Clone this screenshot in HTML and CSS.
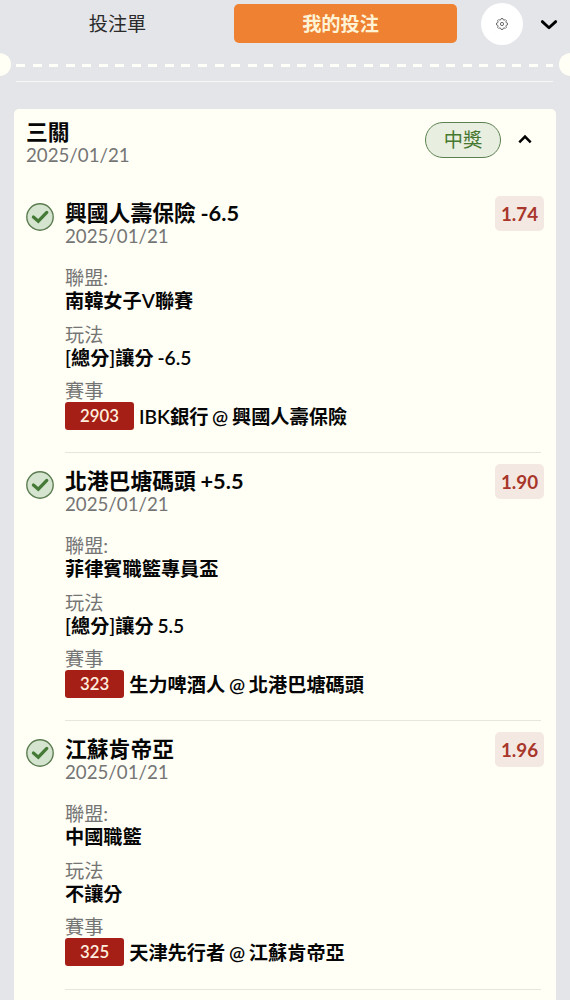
FILE: index.html
```html
<!DOCTYPE html>
<html lang="zh-Hant">
<head>
    <meta charset="UTF-8">
    <meta name="viewport" content="width=device-width, initial-scale=1.0">
    <title>我的投注</title>
    <link rel="stylesheet" href="styles.css">
</head>
<body>

    <!-- Tabs -->
    <header class="tabs">
        <button class="tab">投注單</button>
        <button class="tab active">我的投注</button>
        <button class="settings" aria-label="設定">
            <svg width="12" height="12" viewBox="0 0 12 12" fill="none" stroke="#444" stroke-width=".8" stroke-linejoin="round">
                <path d="M4.8 1.7 5.2.5h1.6l.4 1.2 1 .4 1.1-.5 1.1 1.1-.5 1.1.4 1 1.2.4v1.6l-1.2.4-.4 1 .5 1.1-1.1 1.1-1.1-.5-1 .4-.4 1.2H5.2l-.4-1.2-1-.4-1.1.5-1.1-1.1.5-1.1-.4-1L.5 6.8V5.200l1.2-.4.4-1-.5-1.1 1.1-1.1 1.1.5z"/>
                <circle cx="6" cy="6" r="1.6"/>
            </svg>
        </button>
        <button class="collapse" aria-label="收合">
            <svg width="18" height="12" viewBox="0 0 18 12" fill="none" stroke="#000" stroke-width="2.8" stroke-linecap="round" stroke-linejoin="round">
                <path d="M2.3 2.6 9 8.8l6.7-6.2"/>
            </svg>
        </button>
    </header>

    <!-- Ticket tear line -->
    <div class="tear"></div>

    <main class="ticket">
        <div class="ticket-head">
            <div>
                <h2 class="title">三關</h2>
                <div class="date">2025/01/21</div>
            </div>
            <span class="status">中獎</span>
            <svg class="arrow" width="14" height="10" viewBox="0 0 14 10" fill="none" stroke="#000" stroke-width="2.5">
                <path d="M1.3 8.3 7 2.5l5.7 5.8"/>
            </svg>
        </div>

        <section class="bet">
            <svg class="check" width="28" height="28" viewBox="0 0 28 28" fill="none">
                <circle cx="14" cy="14" r="13.2" fill="#d5e4cf" stroke="#5c7d51" stroke-width="1.4"/>
                <path d="M7.4 14 12.3 18.2 20.8 9.4" stroke="#447a35" stroke-width="3.2" stroke-linecap="round"/>
            </svg>
            <div class="bet-body">
                <div class="bet-head">
                    <h3 class="title">興國人壽保險 -6.5</h3>
                    <span class="odds">1.74</span>
                </div>
                <div class="date">2025/01/21</div>
                <dl>
                    <dt>聯盟:</dt>
                    <dd>南韓女子V聯賽</dd>
                    <dt>玩法</dt>
                    <dd>[總分]讓分 -6.5</dd>
                    <dt>賽事</dt>
                    <dd class="match"><span class="code">2903</span>IBK銀行 @ 興國人壽保險</dd>
                </dl>
            </div>
        </section>

        <section class="bet">
            <svg class="check" width="28" height="28" viewBox="0 0 28 28" fill="none">
                <circle cx="14" cy="14" r="13.2" fill="#d5e4cf" stroke="#5c7d51" stroke-width="1.4"/>
                <path d="M7.4 14 12.3 18.2 20.8 9.4" stroke="#447a35" stroke-width="3.2" stroke-linecap="round"/>
            </svg>
            <div class="bet-body">
                <div class="bet-head">
                    <h3 class="title">北港巴塘碼頭 +5.5</h3>
                    <span class="odds">1.90</span>
                </div>
                <div class="date">2025/01/21</div>
                <dl>
                    <dt>聯盟:</dt>
                    <dd>菲律賓職籃專員盃</dd>
                    <dt>玩法</dt>
                    <dd>[總分]讓分 5.5</dd>
                    <dt>賽事</dt>
                    <dd class="match"><span class="code">323</span>生力啤酒人 @ 北港巴塘碼頭</dd>
                </dl>
            </div>
        </section>

        <section class="bet">
            <svg class="check" width="28" height="28" viewBox="0 0 28 28" fill="none">
                <circle cx="14" cy="14" r="13.2" fill="#d5e4cf" stroke="#5c7d51" stroke-width="1.4"/>
                <path d="M7.4 14 12.3 18.2 20.8 9.4" stroke="#447a35" stroke-width="3.2" stroke-linecap="round"/>
            </svg>
            <div class="bet-body">
                <div class="bet-head">
                    <h3 class="title">江蘇肯帝亞</h3>
                    <span class="odds">1.96</span>
                </div>
                <div class="date">2025/01/21</div>
                <dl>
                    <dt>聯盟:</dt>
                    <dd>中國職籃</dd>
                    <dt>玩法</dt>
                    <dd>不讓分</dd>
                    <dt>賽事</dt>
                    <dd class="match"><span class="code">325</span>天津先行者 @ 江蘇肯帝亞</dd>
                </dl>
            </div>
        </section>
    </main>

</body>
</html>
```
FILE: styles.css
```css
* {
    box-sizing: border-box;
}

body {
    margin: 0;
    height: 1000px;
    overflow: hidden;
    background: #e4e5e8;
    color: #060606;
    font-family: Lato, "Noto Sans CJK TC", sans-serif;
    font-size: 19.2px;
}

button {
    border: none;
    padding: 0;
    background: none;
    font: inherit;
    color: inherit;
    cursor: pointer;
}

h2, h3, dl, dd {
    margin: 0;
}

svg {
    display: block;
}

/* Tabs */
.tabs {
    display: flex;
    align-items: center;
    height: 47px;
    padding-right: 12px;
}

.tab {
    width: 234px;
    height: 39px;
    padding-left: 1px;
    line-height: 39px;
    color: #2b2b2b;
}

.tab.active {
    width: 223px;
    padding: 0 10px 0 0;
    border-radius: 5px;
    background: #ee8132;
    color: #fff3d6;
    font-weight: 600;
}

.settings {
    display: flex;
    align-items: center;
    justify-content: center;
    width: 42px;
    height: 42px;
    margin-left: 24px;
    border-radius: 50%;
    background: #fff;
}

.collapse {
    margin-left: auto;
    padding-top: 2px;
}

/* Dashed line with a notch at each end */
.tear {
    position: relative;
    height: 35px;
    margin: 0 17px 0 16px;
    border-bottom: 1px solid #f7f7f5;
    background: repeating-linear-gradient(to right, #fffffa 0 9px, transparent 9px 16.55px) 0 17px / 100% 3px no-repeat;
}

.tear::before,
.tear::after {
    content: "";
    position: absolute;
    top: 6px;
    width: 23px;
    height: 23px;
    border-radius: 50%;
    background: #fffff6;
}

.tear::before {
    left: -28px;
}

.tear::after {
    right: -29px;
}

/* Ticket */
.ticket {
    min-height: 900px;
    margin: 27px 14px 0;
    padding: 0 12px;
    border-radius: 5px;
    background: #fffff6;
}

.title {
    font-size: 21.8px;
    line-height: 26px;
    font-weight: 700;
    word-spacing: -.6px;
    white-space: nowrap;
}

.date {
    font-size: 18.7px;
    line-height: 20px;
    color: #757575;
}

.ticket-head {
    display: flex;
    align-items: flex-start;
    height: 76px;
    padding-top: 10px;
}

.status {
    width: 76px;
    height: 36px;
    margin: 3px 17px 0 auto;
    border: 1.5px solid #5c8150;
    border-radius: 18px;
    background: #e8eee0;
    color: #47782f;
    line-height: 33px;
    text-align: center;
}

.arrow {
    margin: 15px 12px 0 0;
}

/* Bet */
.bet {
    display: flex;
    height: 268.2px;
}

.check {
    flex: none;
    margin: 18px 11px 0 0;
}

.bet-body {
    flex: 1;
    margin-right: 3px;
    padding-top: 15px;
    border-bottom: 1px solid #e6e6df;
}

.bet-head {
    display: flex;
    justify-content: space-between;
    height: 26px;
}

.odds {
    width: 49px;
    height: 35px;
    margin: -4px -3px 0 0;
    border-radius: 5px;
    background: #f4e8e2;
    color: #a8362a;
    font-size: 18.8px;
    font-weight: 700;
    line-height: 35px;
    text-align: center;
}

dl {
    margin-top: 20px;
}

dt {
    line-height: 23px;
    color: #757575;
}

dd {
    height: 24px;
    margin-bottom: 9.5px;
    line-height: 24px;
    font-weight: 600;
    word-spacing: -1px;
    white-space: nowrap;
}

.match {
    display: flex;
    gap: 5px;
    height: 28px;
    line-height: 30px;
}

.code {
    padding: 0 15px;
    border-radius: 3px;
    background: #a61f17;
    color: #ffeede;
    font-size: 16.8px;
    line-height: 28px;
}
```
